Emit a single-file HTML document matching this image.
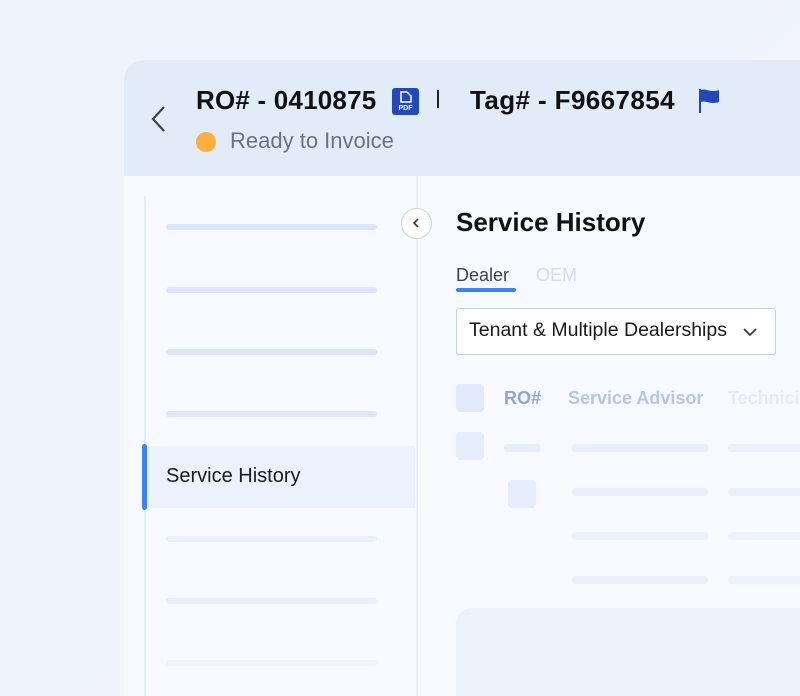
<!DOCTYPE html>
<html><head><style>
*{margin:0;padding:0;box-sizing:border-box}
html,body{width:800px;height:696px;overflow:hidden}
body{background:linear-gradient(135deg,#eef3fc,#f3f6fd);font-family:"Liberation Sans",sans-serif;position:relative}
.a{position:absolute}
.card{left:124px;top:60px;width:676px;height:636px;border-radius:20px 0 0 0;background:#f7faff;overflow:hidden}
.hdr{left:0;top:0;width:700px;height:116px;background:#e2ebf8}
.bar{position:absolute;height:6px;border-radius:3px;background:#dde6fb}
.bl{background:#e9effc}
</style></head><body>
<div class="a card">
  <div class="a hdr"></div>
  <svg class="a" style="left:24px;top:45px" width="20" height="30"><path d="M16 2 L5 14 L16 26" stroke="#3b4250" stroke-width="2.2" fill="none"/></svg>
  <div class="a" style="left:72px;top:25px;font-size:26px;font-weight:bold;color:#111;letter-spacing:0.2px">RO# - 0410875</div>
  <svg class="a" style="left:268px;top:28px" width="28" height="28"><rect x="0" y="0" width="27" height="27" rx="3" fill="#2448b8"/><path d="M9 4h6l4 4v6H9z" fill="none" stroke="#fff" stroke-width="1.5"/><text x="13.5" y="22" font-size="7" fill="#fff" text-anchor="middle" font-family="Liberation Sans" font-weight="bold">PDF</text></svg>
  <div class="a" style="left:313px;top:30px;width:2px;height:18px;background:#222"></div>
  <div class="a" style="left:346px;top:25px;font-size:26px;font-weight:bold;color:#111;letter-spacing:0.4px">Tag# - F9667854</div>
  <svg class="a" style="left:574px;top:28px" width="24" height="26"><path d="M2 1V25" stroke="#2448b8" stroke-width="2"/><path d="M3 2C8 0 12 5 21 2V14C12 17 8 12 3 14Z" fill="#2448b8"/></svg>
  <div class="a" style="left:72px;top:72px;width:20px;height:20px;border-radius:50%;background:#fbb03b"></div>
  <div class="a" style="left:106px;top:68px;font-size:22px;color:#6b7280">Ready to Invoice</div>

  <div class="a" style="left:20px;top:136px;width:2px;height:600px;background:#e4ebfa"></div>
  <div class="bar" style="left:42px;top:164px;width:211px"></div>
  <div class="bar" style="left:42px;top:227px;width:211px"></div>
  <div class="bar" style="left:42px;top:289px;width:211px"></div>
  <div class="bar" style="left:42px;top:351px;width:211px"></div>
  <div class="a" style="left:22px;top:386px;width:269px;height:62px;background:#ebf2fe"></div>
  <div class="a" style="left:18px;top:384px;width:5px;height:66px;border-radius:3px;background:#3b82f6"></div>
  <div class="a" style="left:42px;top:405px;font-size:20px;color:#1a1a1a">Service History</div>
  <div class="bar bl" style="left:42px;top:476px;width:211px"></div>
  <div class="bar bl" style="left:42px;top:538px;width:211px"></div>
  <div class="bar bl" style="left:42px;top:600px;width:211px;background:#eef3fd"></div>
  <div class="a" style="left:292px;top:116px;width:2px;height:600px;background:#eaf0fa"></div>
  <div class="a" style="left:277px;top:148px;width:31px;height:31px;border-radius:50%;background:#fff;border:1px solid #c9d3e3"></div>
  <svg class="a" style="left:286px;top:157px" width="12" height="12"><path d="M8 2L4 6L8 10" stroke="#333" stroke-width="1.6" fill="none"/></svg>

  <div class="a" style="left:332px;top:147px;font-size:26px;font-weight:bold;color:#111">Service History</div>
  <div class="a" style="left:332px;top:205px;font-size:18px;color:#3a4252">Dealer</div>
  <div class="a" style="left:412px;top:205px;font-size:18px;color:#d2dcef">OEM</div>
  <div class="a" style="left:332px;top:228px;width:60px;height:4px;border-radius:2px;background:#3b82f6"></div>
  <div class="a" style="left:332px;top:248px;width:320px;height:47px;border:1.5px solid #c9d1dd;border-radius:3px;background:#fff"></div>
  <div class="a" style="left:345px;top:259px;font-size:19.5px;color:#1a1a1a">Tenant &amp; Multiple Dealerships</div>
  <svg class="a" style="left:618px;top:266px" width="16" height="12"><path d="M2 3L8 9L14 3" stroke="#333" stroke-width="1.6" fill="none"/></svg>

  <div class="a" style="left:332px;top:324px;width:28px;height:28px;border-radius:4px;background:#e1e9fb"></div>
  <div class="a" style="left:380px;top:328px;font-size:18px;font-weight:bold;color:#8ea5dc">RO#</div>
  <div class="a" style="left:444px;top:328px;font-size:18px;font-weight:bold;color:#b4c5ec">Service Advisor</div>
  <div class="a" style="left:604px;top:328px;font-size:18px;font-weight:bold;color:#e3eafa">Technician</div>
  <div class="a" style="left:332px;top:372px;width:28px;height:28px;border-radius:4px;background:#e6edfc"></div>
  <div class="bar" style="left:380px;top:384px;width:36px;height:8px;background:#e6edfc"></div>
  <div class="a" style="left:384px;top:420px;width:28px;height:28px;border-radius:4px;background:#e6edfc"></div>
  <div class="bar" style="left:448px;top:384px;width:136px;height:8px;background:#e8eefc"></div>
  <div class="bar" style="left:604px;top:384px;width:120px;height:8px;background:#ebf0fc"></div>
  <div class="bar" style="left:448px;top:428px;width:136px;height:8px;background:#e8eefc"></div>
  <div class="bar" style="left:604px;top:428px;width:120px;height:8px;background:#ebf0fc"></div>
  <div class="bar" style="left:448px;top:472px;width:136px;height:8px;background:#eaf0fc"></div>
  <div class="bar" style="left:604px;top:472px;width:120px;height:8px;background:#edf2fc"></div>
  <div class="bar" style="left:448px;top:516px;width:136px;height:8px;background:#eaf0fc"></div>
  <div class="bar" style="left:604px;top:516px;width:120px;height:8px;background:#edf2fc"></div>
  <div class="a" style="left:332px;top:548px;width:400px;height:200px;border-radius:16px;background:#ecf2fc"></div>
</div>
</body></html>
